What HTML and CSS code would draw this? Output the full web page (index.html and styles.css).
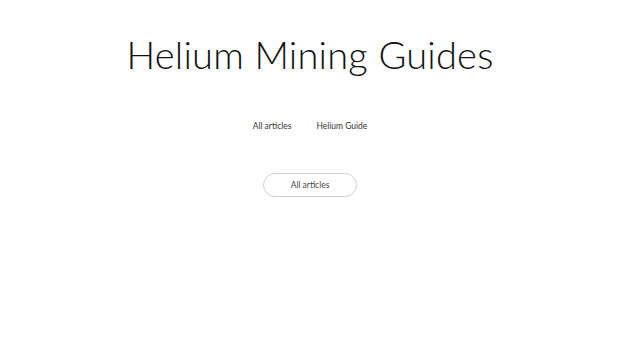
FILE: index.html
```html
<!DOCTYPE html>
<html lang="en">
<head>
<meta charset="utf-8">
<title>Helium Mining Guides</title>
<link rel="stylesheet" href="styles.css">
</head>
<body>
<main class="page">
  <h1 class="title">Helium Mining Guides</h1>
  <nav class="tabs">
    <a class="tab" href="#">All articles</a>
    <a class="tab" href="#">Helium Guide</a>
  </nav>
  <a class="pill" href="#">All articles</a>
</main>
</body>
</html>
```
FILE: styles.css
```css
html, body {
  margin: 0;
  padding: 0;
  background: #ffffff;
}
.page {
  display: flex;
  flex-direction: column;
  align-items: center;
  padding-top: 31px;
}
.title {
  margin: 0;
  font-family: "Lato", "Open Sans", sans-serif;
  font-weight: 300;
  font-size: 38px;
  line-height: 46px;
  color: #111;
  letter-spacing: 0.2px;
}
.tabs {
  display: flex;
  gap: 25px;
  margin-top: 43px;
}
.tab {
  font-family: "Lato", "Open Sans", sans-serif;
  font-size: 8.5px;
  line-height: 12px;
  color: #333;
  text-decoration: none;
}
.pill {
  margin-top: 41px;
  width: 92px;
  height: 22px;
  box-sizing: content-box;
  border: 1.5px solid #d0d0d0;
  border-radius: 14px;
  display: flex;
  align-items: center;
  justify-content: center;
  font-family: "Lato", "Open Sans", sans-serif;
  font-size: 8.5px;
  color: #444;
  text-decoration: none;
}
```
